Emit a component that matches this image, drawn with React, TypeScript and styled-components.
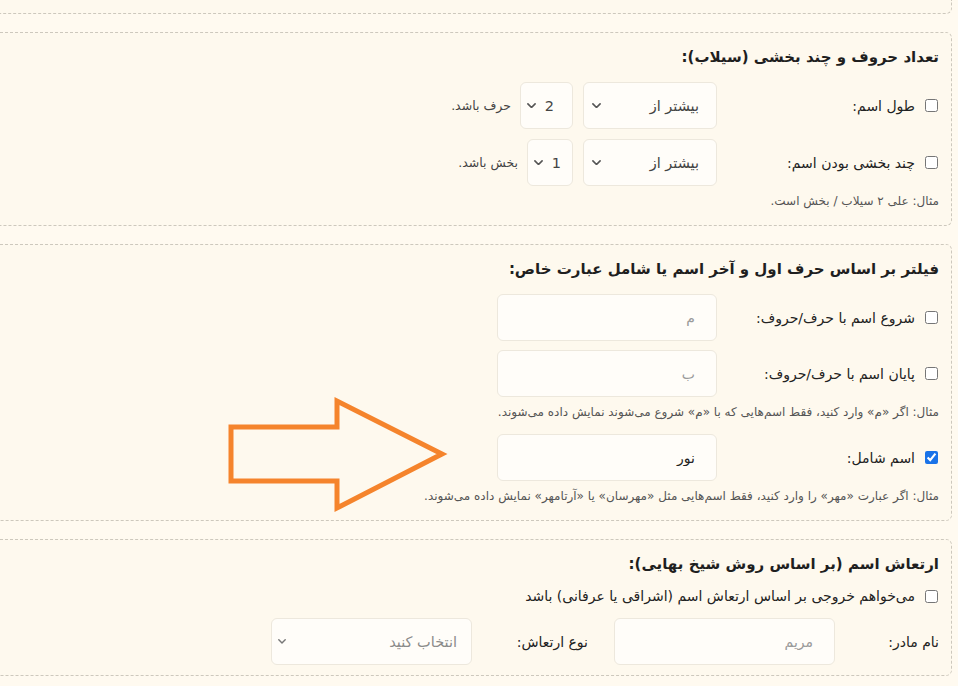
import React from "react";
import styled, { createGlobalStyle } from "styled-components";

const Global = createGlobalStyle`
  html, body { margin: 0; padding: 0; background: #fffaf0; }
  body {
    font-family: "DejaVu Sans", "Noto Sans", sans-serif;
    color: #222;
    overflow: hidden;
  }
  * { box-sizing: border-box; }
`;

const Page = styled.div`
  position: relative;
  direction: rtl;
  display: flex;
  flex-direction: column;
  gap: 18px;
  padding: 0 6px 0 0;
  width: 958px;
`;

const Card = styled.section<{ $pb?: number }>`
  background: #fef9ee;
  border: 1px dashed #cdc8bd;
  border-left: none;
  border-radius: 0 6px 6px 0;
  padding: 12px 12px ${(p) => p.$pb ?? 15}px 0;
  display: flex;
  flex-direction: column;
`;

const CutCard = styled.div`
  height: 14px;
  background: #fef9ee;
  border: 1px dashed #cdc8bd;
  border-top: none;
  border-left: none;
  border-bottom-right-radius: 6px;
`;

const Title = styled.h3<{ $mb?: number }>`
  margin: 0 0 ${(p) => p.$mb ?? 13}px 0;
  font-size: 15px;
  font-weight: 700;
  line-height: 24px;
  color: #1f1f1f;
`;

const Row = styled.div<{ $mt?: number }>`
  display: flex;
  align-items: center;
  height: 47px;
  margin-top: ${(p) => p.$mt ?? 0}px;
`;

const CheckLabel = styled.label<{ $w?: number }>`
  display: flex;
  align-items: center;
  gap: 10px;
  width: ${(p) => (p.$w ? `${p.$w}px` : "auto")};
  flex-shrink: 0;
  font-size: 14px;
  color: #222;
`;

const Check = styled.input.attrs({ type: "checkbox" })`
  width: 13px;
  height: 13px;
  margin: 0 1px 0 0;
  accent-color: #1a73e8;
`;

const PlainLabel = styled.span<{ $w: number; $pr?: number }>`
  width: ${(p) => p.$w}px;
  padding-right: ${(p) => p.$pr ?? 0}px;
  flex-shrink: 0;
  font-size: 14px;
  color: #222;
`;

const TextInput = styled.input<{ $w: number }>`
  width: ${(p) => p.$w}px;
  height: 47px;
  flex-shrink: 0;
  background: #fffdf9;
  border: 1px solid #ede8dd;
  border-radius: 6px;
  padding: 0 21px;
  font-family: inherit;
  font-size: 14px;
  color: #222;
  direction: rtl;
  outline: none;
  &::placeholder { color: #9a9a9a; }
`;

const SelectBox = styled.div<{ $w: number; $pr: number; $pl: number; $muted?: boolean }>`
  width: ${(p) => p.$w}px;
  height: 47px;
  flex-shrink: 0;
  display: flex;
  align-items: center;
  justify-content: space-between;
  padding: 0 ${(p) => p.$pr}px 0 ${(p) => p.$pl}px;
  background: #fffdf9;
  border: 1px solid #ede8dd;
  border-radius: 6px;
  font-size: 14.5px;
  color: ${(p) => (p.$muted ? "#8a8a8a" : "#444")};
`;

const Gap = styled.div<{ $w: number }>`
  width: ${(p) => p.$w}px;
  flex-shrink: 0;
`;

const Suffix = styled.span`
  font-size: 12.5px;
  color: #444;
`;

const Note = styled.p<{ $mb?: number }>`
  margin: 6px 0 ${(p) => p.$mb ?? 0}px 0;
  font-size: 12px;
  line-height: 18px;
  color: #555;
`;

const CheckLine = styled.label`
  display: flex;
  align-items: center;
  gap: 10px;
  height: 18px;
  margin-bottom: 13px;
  font-size: 14px;
  color: #222;
`;

const ArrowSvg = styled.svg`
  position: absolute;
  left: 226px;
  top: 396px;
  pointer-events: none;
`;

const Chevron: React.FC<{ size?: number; color?: string }> = ({ size = 9, color = "#555" }) => (
  <svg width={size} height={size * 0.6} viewBox="0 0 10 6" fill="none">
    <path d="M1 1 L5 5 L9 1" stroke={color} strokeWidth="1.8" strokeLinecap="round" strokeLinejoin="round" />
  </svg>
);

export default function App() {
  return (
    <>
      <Global />
      <Page>
        <CutCard />

        <Card>
          <Title>تعداد حروف و چند بخشی (سیلاب):</Title>
          <Row>
            <CheckLabel $w={222}>
              <Check />
              طول اسم:
            </CheckLabel>
            <SelectBox $w={134} $pr={17} $pl={8}>
              <span>بیشتر از</span>
              <Chevron />
            </SelectBox>
            <Gap $w={10} />
            <SelectBox $w={53} $pr={18} $pl={6}>
              <span>2</span>
              <Chevron />
            </SelectBox>
            <Gap $w={9} />
            <Suffix>حرف باشد.</Suffix>
          </Row>
          <Row $mt={10}>
            <CheckLabel $w={222}>
              <Check />
              چند بخشی بودن اسم:
            </CheckLabel>
            <SelectBox $w={134} $pr={17} $pl={8}>
              <span>بیشتر از</span>
              <Chevron />
            </SelectBox>
            <Gap $w={10} />
            <SelectBox $w={46} $pr={11} $pl={6}>
              <span>1</span>
              <Chevron />
            </SelectBox>
            <Gap $w={9} />
            <Suffix>بخش باشد.</Suffix>
          </Row>
          <Note>مثال: علی ۲ سیلاب / بخش است.</Note>
        </Card>

        <Card>
          <Title>فیلتر بر اساس حرف اول و آخر اسم یا شامل عبارت خاص:</Title>
          <Row>
            <CheckLabel $w={222}>
              <Check />
              شروع اسم با حرف/حروف:
            </CheckLabel>
            <TextInput $w={220} placeholder="م" />
          </Row>
          <Row $mt={9}>
            <CheckLabel $w={222}>
              <Check />
              پایان اسم با حرف/حروف:
            </CheckLabel>
            <TextInput $w={220} placeholder="ب" />
          </Row>
          <Note $mb={13}>مثال: اگر «م» وارد کنید، فقط اسم‌هایی که با «م» شروع می‌شوند نمایش داده می‌شوند.</Note>
          <Row>
            <CheckLabel $w={222}>
              <Check defaultChecked />
              اسم شامل:
            </CheckLabel>
            <TextInput $w={220} defaultValue="نور" />
          </Row>
          <Note>مثال: اگر عبارت «مهر» را وارد کنید، فقط اسم‌هایی مثل «مهرسان» یا «آرتامهر» نمایش داده می‌شوند.</Note>
        </Card>

        <Card $pb={10}>
          <Title $mb={11}>ارتعاش اسم (بر اساس روش شیخ بهایی):</Title>
          <CheckLine>
            <Check />
            می‌خواهم خروجی بر اساس ارتعاش اسم (اشراقی یا عرفانی) باشد
          </CheckLine>
          <Row>
            <PlainLabel $w={104}>نام مادر:</PlainLabel>
            <TextInput $w={221} placeholder="مریم" />
            <PlainLabel $w={142} $pr={26}>نوع ارتعاش:</PlainLabel>
            <SelectBox $w={201} $pr={14} $pl={6} $muted>
              <span>انتخاب کنید</span>
              <Chevron size={8} color="#777" />
            </SelectBox>
          </Row>
        </Card>

        <ArrowSvg width="222" height="118" viewBox="0 0 222 118">
          <polygon
            points="5,31 111,31 111,5 216,58 111,112 111,85 5,85"
            fill="none"
            stroke="#f5842c"
            strokeWidth="5"
            strokeLinejoin="miter"
          />
        </ArrowSvg>
      </Page>
    </>
  );
}
